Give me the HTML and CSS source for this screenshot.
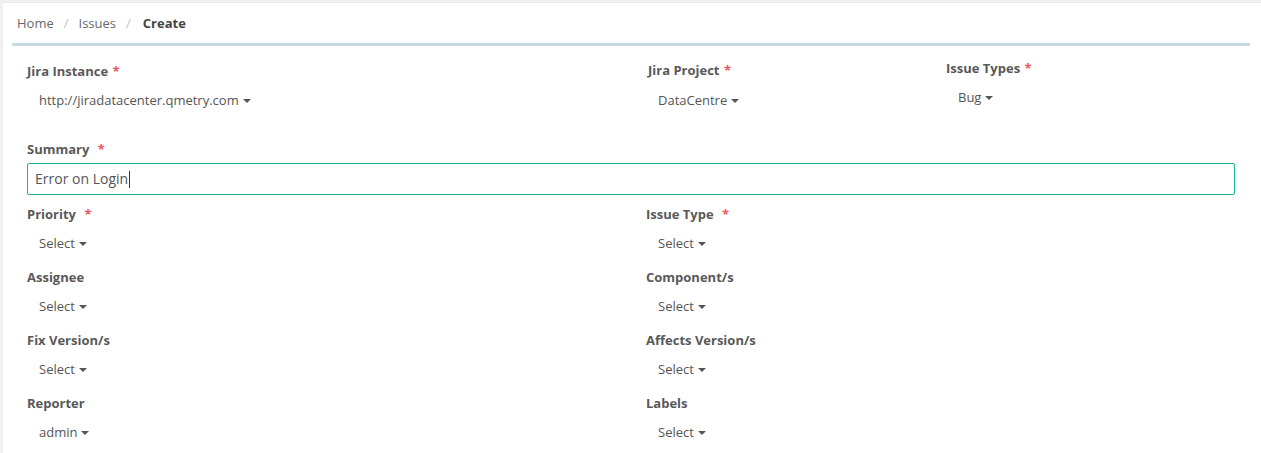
FILE: index.html
```html
<!DOCTYPE html>
<html>
<head>
<meta charset="utf-8">
<link rel="stylesheet" href="styles.css">
</head>
<body>
<div class="panel">
  <div class="breadcrumb">
    <span class="crumb">Home</span><span class="sep">/</span><span class="crumb">Issues</span><span class="sep">/</span><span class="crumb active">Create</span>
  </div>
  <div class="divider"></div>
  <form class="form">
    <div class="row row-top">
      <div class="col col-instance">
        <div class="label">Jira Instance <span class="req">*</span></div>
        <div class="dropdown">http://jiradatacenter.qmetry.com <span class="caret"></span></div>
      </div>
      <div class="col col-project">
        <div class="label label-shift">Jira Project <span class="req">*</span></div>
        <div class="dropdown">DataCentre <span class="caret"></span></div>
      </div>
      <div class="col col-types">
        <div class="label">Issue Types <span class="req">*</span></div>
        <div class="dropdown">Bug <span class="caret"></span></div>
      </div>
    </div>
    <div class="row">
      <div class="col col-full">
        <div class="label">Summary <span class="req wide">*</span></div>
        <div class="input">Error on Login<span class="cursor"></span></div>
      </div>
    </div>
    <div class="row">
      <div class="col col-half">
        <div class="label">Priority <span class="req wide">*</span></div>
        <div class="dropdown">Select <span class="caret"></span></div>
      </div>
      <div class="col col-half">
        <div class="label">Issue Type <span class="req wide">*</span></div>
        <div class="dropdown">Select <span class="caret"></span></div>
      </div>
    </div>
    <div class="row">
      <div class="col col-half">
        <div class="label">Assignee</div>
        <div class="dropdown">Select <span class="caret"></span></div>
      </div>
      <div class="col col-half">
        <div class="label">Component/s</div>
        <div class="dropdown">Select <span class="caret"></span></div>
      </div>
    </div>
    <div class="row">
      <div class="col col-half">
        <div class="label">Fix Version/s</div>
        <div class="dropdown">Select <span class="caret"></span></div>
      </div>
      <div class="col col-half">
        <div class="label">Affects Version/s</div>
        <div class="dropdown">Select <span class="caret"></span></div>
      </div>
    </div>
    <div class="row">
      <div class="col col-half">
        <div class="label">Reporter</div>
        <div class="dropdown">admin <span class="caret"></span></div>
      </div>
      <div class="col col-half">
        <div class="label">Labels</div>
        <div class="dropdown">Select <span class="caret"></span></div>
      </div>
    </div>
  </form>
</div>
</body>
</html>
```

FILE: styles.css
```css
html, body {
  margin: 0;
  padding: 0;
}
body {
  background: #f1f1f1;
  font-family: "Open Sans", "Liberation Sans", sans-serif;
  font-size: 13px;
  line-height: 18px;
  color: #555;
  height: 453px;
  overflow: hidden;
}
.panel {
  margin-left: 3px;
  margin-top: 2px;
  border-top: 1px solid #e9e9e9;
  background: #fff;
  height: 450px;
}
.breadcrumb {
  padding: 11px 0 0 14px;
  height: 18px;
  color: #676a6c;
}
.crumb.active {
  font-weight: 700;
  color: #444;
  margin-left: 2px;
}
.sep {
  color: #c4c4c4;
  padding: 0 10px;
}
.divider {
  margin: 11px 11px 0 9px;
  height: 3px;
  background: #c5dae5;
}
.form {
  margin: 16px 11px 0 9px;
}
.row {
  display: flex;
  margin-bottom: 10px;
}
.row-top {
  margin-bottom: 25px;
}
.col {
  padding: 0 15px;
  box-sizing: border-box;
}
.col-instance, .col-half {
  width: 50%;
}
.col-project {
  width: 300px;
}
.col-types {
  margin-top: -3px;
}
.col-full {
  width: 100%;
}
.label {
  font-weight: 700;
  color: #595959;
  height: 18px;
  margin-bottom: 5px;
}
.label-shift {
  margin-left: 2px;
  margin-top: -1px;
  margin-bottom: 6px;
}
.req {
  color: #ed5565;
  margin-left: 1px;
}
.req.wide {
  margin-left: 5px;
}
.dropdown {
  padding: 6px 12px;
  color: #555;
  display: flex;
  align-items: center;
  white-space: nowrap;
}
.caret {
  display: inline-block;
  width: 0;
  height: 0;
  border-top: 4px solid #555;
  border-left: 4px solid transparent;
  border-right: 4px solid transparent;
  margin-left: 4px;
  margin-top: 2px;
}
.input {
  height: 30px;
  border: 1px solid #1ab394;
  border-radius: 2px;
  padding: 0 7px;
  font-size: 14px;
  line-height: 30px;
  color: #555;
  display: flex;
  align-items: center;
}
.cursor {
  display: inline-block;
  width: 1px;
  height: 17px;
  background: #333;
  margin-left: 1px;
}
```
